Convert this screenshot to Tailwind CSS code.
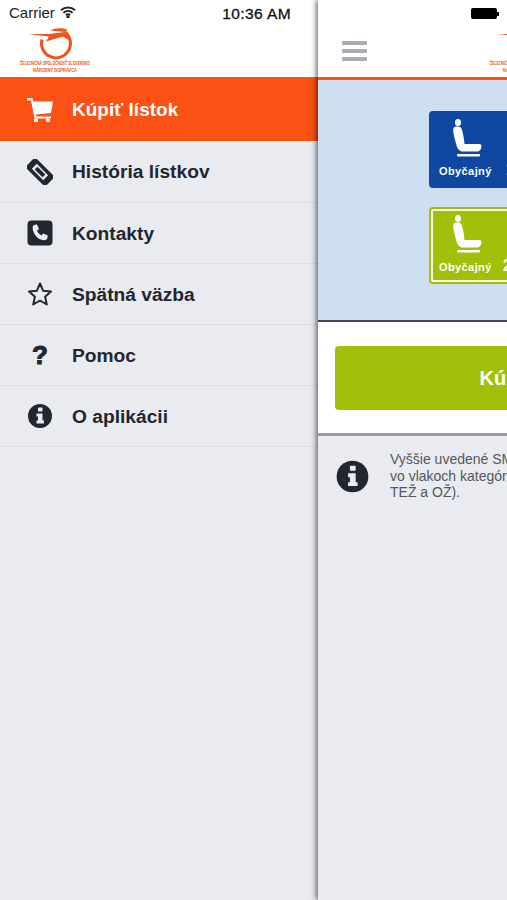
<!DOCTYPE html>
<html lang="sk">
  <head>
    <meta charset="utf-8" />
    <title>Menu</title>
    <script src="https://cdn.jsdelivr.net/npm/@tailwindcss/browser@4"></script>
  </head>
  <body class="overflow-hidden">
    <div class="flex h-[900px] w-[507px] overflow-hidden bg-[#e9ebf0] font-['Liberation_Sans',sans-serif]">
      <!-- side menu -->
      <div class="flex w-[318px] shrink-0 flex-col">
        <div class="h-[77px] bg-white">
          <div class="flex h-[27px] items-center justify-between pr-[27px] pl-[9px] text-[15px] text-[#222]">
            <div class="flex items-center gap-[5px]">
              <span>Carrier</span>
              <svg class="mb-[3px]" width="16" height="12" viewBox="0 0 16 12" fill="none" stroke="#222" stroke-width="1.9">
                <path d="M1 4.200C5 .6 11 .6 15 4.200" />
                <path d="M3.400 6.700c2.700-2.300 6.500-2.300 9.200 0" />
                <path d="M5.800 9c1.300-1 3.100-1 4.400 0" />
                <circle cx="8" cy="10.800" r=".7" fill="#222" />
              </svg>
            </div>
            <span class="text-[15.500px] font-medium tracking-[0.4px] text-[#111] [-webkit-text-stroke:0.3px_#111]">10:36 AM</span>
          </div>
          <div class="pl-[19px]">
            <svg width="72" height="46" viewBox="0 0 72 46">
              <path d="M23 12.500A14.500 14.500 0 1 0 46 5" fill="none" stroke="#f0531c" stroke-width="3" />
              <path d="M31 3.500C37 .5 44 .5 49 3L46 4 51 14 44 9.500 27 14.500 30 9.500 9 7 30 7 46 5Z" fill="#f0531c" />
              <text x="36" y="37.500" text-anchor="middle" font-size="5" font-weight="700" fill="#f0531c" textLength="70" lengthAdjust="spacingAndGlyphs">ŽELEZNIČNÁ SPOLOČNOSŤ SLOVENSKO</text>
              <text x="36" y="45" text-anchor="middle" font-size="5" font-weight="700" fill="#f0531c" textLength="44" lengthAdjust="spacingAndGlyphs">NÁRODNÝ DOPRAVCA</text>
            </svg>
          </div>
        </div>
        <div class="flex h-[64px] items-center gap-[19px] bg-[#fc5114] pt-[1px] pl-[27px] text-[19px] font-bold text-white">
          <svg class="w-[26px]" width="26" height="24" viewBox="0 0 26 24" fill="#fff">
            <path d="M0 0h5.500l1 3.500H26l-2 11.500-15 1.500.4 2H24v2H7.500L4 2.500H0Z" />
            <rect x="7" y="20.500" width="4" height="3.500" rx="1" />
            <rect x="19" y="20.500" width="4" height="3.500" rx="1" />
          </svg>
          <span class="pt-[1px]">Kúpiť lístok</span>
        </div>
        <div class="flex h-[62px] items-center gap-[19px] border-b border-[#dcdfe4] pl-[27px] text-[19.200px] font-bold text-[#22262e]">
          <svg class="w-[26px]" width="26" height="26" viewBox="0 0 26 26">
            <g transform="rotate(45 13 13)">
              <rect x="-1" y="6" width="28" height="14" rx="1" fill="#22262e" />
              <rect x="5" y="9.500" width="16" height="7" fill="#e9ebf0" />
              <rect x="7.500" y="11" width="11" height="4" fill="#22262e" />
            </g>
          </svg>
          <span class="pt-[2px]">História lístkov</span>
        </div>
        <div class="flex h-[61px] items-center gap-[19px] border-b border-[#dcdfe4] pl-[27px] text-[19.200px] font-bold text-[#22262e]">
          <svg class="w-[26px]" width="26" height="26" viewBox="0 0 26 26">
            <rect x=".5" y=".5" width="25" height="25" rx="4" fill="#22262e" />
            <path d="M7.500 4.800 10 4.500l2 4.500-2 1.800c.8 2 2.500 3.700 4.500 4.700l1.800-2 4.500 2-.5 2.800c-.3 1.200-2 2.200-3.500 2C10.500 19.500 6 14 5.600 8c-.1-1.500.7-2.900 1.900-3.200Z" fill="#e9ebf0" />
          </svg>
          <span class="pt-[2px]">Kontakty</span>
        </div>
        <div class="flex h-[61px] items-center gap-[19px] border-b border-[#dcdfe4] pl-[27px] text-[19.200px] font-bold text-[#22262e]">
          <svg class="w-[26px]" width="26" height="26" viewBox="0 0 26 26">
            <path d="M13 2.500l3.200 7.300 7.800.8-5.900 5.200 1.700 7.700L13 19.500l-6.800 4 1.700-7.700L2 10.600l7.800-.8Z" fill="none" stroke="#22262e" stroke-width="2" stroke-linejoin="round" />
          </svg>
          <span class="pt-[2px]">Spätná väzba</span>
        </div>
        <div class="flex h-[61px] items-center gap-[19px] border-b border-[#dcdfe4] pl-[27px] text-[19.200px] font-bold text-[#22262e]">
          <span class="w-[26px] text-center text-[26px] leading-none font-bold [-webkit-text-stroke:1px_#22262e]">?</span>
          <span class="pt-[2px]">Pomoc</span>
        </div>
        <div class="flex h-[61px] items-center gap-[19px] border-b border-[#dcdfe4] pl-[27px] text-[19.200px] font-bold text-[#22262e]">
          <svg class="w-[26px]" width="26" height="26" viewBox="0 0 26 26">
            <circle cx="13" cy="13" r="12" fill="#22262e" />
            <rect x="11" y="4.500" width="4.500" height="4" rx=".6" fill="#e9ebf0" />
            <path d="M9.500 10.500h6v7h1.500v3H9.500v-3H11v-4H9.500Z" fill="#e9ebf0" />
          </svg>
          <span class="pt-[2px]">O aplikácii</span>
        </div>
      </div>

      <!-- main screen, runs off the right edge -->
      <div class="z-10 flex w-[189px] shrink-0 flex-col overflow-hidden shadow-[-2px_0_5px_rgba(0,0,0,0.55)]">
        <div class="h-[77px] w-[420px] shrink-0 bg-white">
          <div class="flex h-[27px] items-center pl-[153px]">
            <div class="h-[11px] w-[26px] rounded-[2px] bg-black"></div>
            <div class="h-[4px] w-[1.500px] bg-black"></div>
          </div>
          <div class="flex items-start pl-[24px]">
            <div class="mt-[14px] flex w-[25px] flex-col gap-[4px]">
              <div class="h-[4px] rounded-[1px] bg-[#a9acb4]"></div>
              <div class="h-[4px] rounded-[1px] bg-[#a9acb4]"></div>
              <div class="h-[4px] rounded-[1px] bg-[#a9acb4]"></div>
            </div>
            <svg class="ml-[122px]" width="72" height="46" viewBox="0 0 72 46">
              <path d="M23 12.500A14.500 14.500 0 1 0 46 5" fill="none" stroke="#f0531c" stroke-width="3" />
              <path d="M31 3.500C37 .5 44 .5 49 3L46 4 51 14 44 9.500 27 14.500 30 9.500 9 7 30 7 46 5Z" fill="#f0531c" />
              <text x="36" y="37.500" text-anchor="middle" font-size="5" font-weight="700" fill="#f0531c" textLength="70" lengthAdjust="spacingAndGlyphs">ŽELEZNIČNÁ SPOLOČNOSŤ SLOVENSKO</text>
              <text x="36" y="45" text-anchor="middle" font-size="5" font-weight="700" fill="#f0531c" textLength="44" lengthAdjust="spacingAndGlyphs">NÁRODNÝ DOPRAVCA</text>
            </svg>
          </div>
        </div>
        <div class="h-[3px] shrink-0 bg-[#fc5114]"></div>
        <div class="flex h-[240px] w-[420px] shrink-0 flex-col gap-[19px] bg-[#cedff1] pt-[31px] pl-[111px]">
          <div class="flex h-[77px] w-[130px] flex-col items-start rounded-[4px] bg-[#0f47a1] pt-[8px] pl-[10px] text-white">
            <svg class="ml-[12px]" width="32" height="40" viewBox="0 0 32 40" fill="#fff">
              <ellipse cx="7" cy="3.500" rx="3" ry="3.500" />
              <path d="M2.500 9C4 7 9 7 10.500 9.500c1.500 4 2.500 10 3 15.500h14c2 0 3 .5 3 2 0 3-1.500 5-3.500 5.500H11c-3-.5-5-3-6-8C4 20 1.500 13 2.500 9Z" />
              <rect x="6" y="35" width="23" height="2.500" rx="1" />
            </svg>
            <div class="-mt-[2px] flex items-baseline gap-[14px] text-[11px] font-bold tracking-[0.4px]">
              <span>Obyčajný</span><span class="text-[17px]">1</span>
            </div>
          </div>
          <div class="flex h-[77px] w-[130px] flex-col items-start rounded-[4px] border-[2px] border-[#a2c00a] bg-[#a2c00a] pt-[6px] pl-[8px] text-white outline-2 -outline-offset-4 outline-white/90">
            <svg class="ml-[12px]" width="32" height="40" viewBox="0 0 32 40" fill="#fff">
              <ellipse cx="7" cy="3.500" rx="3" ry="3.500" />
              <path d="M2.500 9C4 7 9 7 10.500 9.500c1.500 4 2.500 10 3 15.500h14c2 0 3 .5 3 2 0 3-1.500 5-3.500 5.500H11c-3-.5-5-3-6-8C4 20 1.500 13 2.500 9Z" />
              <rect x="6" y="35" width="23" height="2.500" rx="1" />
            </svg>
            <div class="-mt-[2px] flex items-baseline gap-[11px] text-[11px] font-bold tracking-[0.4px]">
              <span>Obyčajný</span><span class="text-[17px]">2</span>
            </div>
          </div>
        </div>
        <div class="h-[2px] shrink-0 bg-[#3b4657]"></div>
        <div class="h-[111px] w-[420px] shrink-0 bg-white pt-[24px] pl-[17px]">
          <div class="flex h-[64px] w-[380px] items-center justify-center rounded-[4px] bg-[#a2c00a] text-[20px] font-bold text-white">
            <span class="pl-[21px]">Kúpiť lístok</span>
          </div>
        </div>
        <div class="h-[3px] shrink-0 bg-[#9a9ca1]"></div>
        <div class="flex w-[420px] flex-1 items-start bg-[#e9ebf0] pt-[23px] pl-[18px]">
          <svg class="mt-[1px] shrink-0" width="33" height="33" viewBox="0 0 26 26">
            <circle cx="13" cy="13" r="12.500" fill="#22262e" />
            <rect x="11" y="4.500" width="4.500" height="4" rx=".6" fill="#e9ebf0" />
            <path d="M9.500 10.500h6v7h1.500v3H9.500v-3H11v-4H9.500Z" fill="#e9ebf0" />
          </svg>
          <p class="-mt-[8px] ml-[21px] text-[14px] leading-[16.500px] whitespace-nowrap text-[#54575d]">
            Vyššie uvedené SMS lístky<br />vo vlakoch kategórie<br />TEŽ a OŽ).
          </p>
        </div>
      </div>
    </div>
  </body>
</html>
